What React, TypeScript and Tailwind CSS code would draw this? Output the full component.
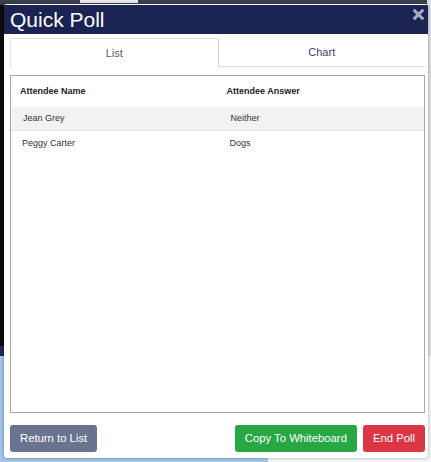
const rows = [
  { name: "Jean Grey", answer: "Neither" },
  { name: "Peggy Carter", answer: "Dogs" },
];

export default function App() {
  return (
    <div
      className="relative w-[431px] h-[462px] overflow-hidden bg-[#0b0b0d]"
      style={{ fontFamily: '"Liberation Sans", Arial, sans-serif' }}
    >
      {/* backdrop behind the dialog */}
      <div className="absolute left-0 top-0 w-full h-[5px] bg-[#3b3f4d]" />
      <div className="absolute left-[80px] top-0 w-[58px] h-[3px] bg-[#e8e8ea]" />
      <div className="absolute left-0 top-[346px] w-full h-[10px] bg-[#1c2a50]" />
      <div className="absolute left-0 top-[356px] w-full h-[106px] bg-[#9ec4e8]" />
      <div className="absolute left-[268px] top-[356px] w-[163px] h-[106px] bg-[#f1f3f6]" />
      <div className="absolute right-0 top-0 w-[4px] h-[356px] bg-[#d9dbe0]" />

      <div className="relative pl-[4px] pt-[4px] pr-[3px]">
        <div className="flex flex-col h-[454px] bg-white rounded-[3px] shadow-[0_0_3px_rgba(0,0,0,0.35)] overflow-hidden">
          {/* header */}
          <div className="flex items-start justify-between h-[29px] mt-[1px] bg-[#1a2352] pl-[6px] pr-[4px]">
            <span className="text-white text-[21px] leading-[29px]">Quick Poll</span>
            <svg width="11" height="11" viewBox="0 0 10 10" className="mt-[4px]">
              <path d="M1.6 1.6 L8.4 8.4 M8.4 1.6 L1.6 8.4" stroke="#a6abbe" strokeWidth="2.8" strokeLinecap="square" />
            </svg>
          </div>

          <div className="flex flex-col flex-1 pl-[6px] pr-[3px] pt-[4px] pb-[6px]">
            {/* tabs */}
            <div className="flex h-[29px] text-[11px]">
              <div className="flex-1 flex items-center justify-center text-[#5a5a5a] border border-b-0 border-[#e2e2e2] rounded-t-[3px]">
                List
              </div>
              <div className="flex-1 flex items-center justify-center text-[#34426b] border-b border-[#e2e2e2] shadow-[-1px_0_2px_rgba(0,0,0,0.08)]">
                Chart
              </div>
            </div>

            {/* answers table */}
            <div className="mt-[8px] h-[338px] border border-[#a8a8a8] text-[9px] text-[#333]">
              <div className="flex h-[31px] items-center pt-[1px] font-bold text-[#222]">
                <div className="w-1/2 pl-[9px]">Attendee Name</div>
                <div className="w-1/2 pl-[9px]">Attendee Answer</div>
              </div>
              {rows.map((row, i) => (
                <div
                  key={row.name}
                  className={`flex h-[24px] items-center ${i === 0 ? "bg-[#f2f2f2] border-b border-[#e4e4e4] pt-[1px]" : "pt-[2px]"}`}
                >
                  <div className={`w-1/2 ${i === 0 ? "pl-[12px]" : "pl-[11px]"}`}>{row.name}</div>
                  <div className={`w-1/2 ${i === 0 ? "pl-[13px]" : "pl-[12px]"}`}>{row.answer}</div>
                </div>
              ))}
            </div>

            {/* actions */}
            <div className="flex items-center mt-auto text-[11.3px] text-white">
              <button className="h-[27px] px-[10px] rounded-[3px] bg-[#6a7390]">Return to List</button>
              <div className="flex-1" />
              <button className="h-[27px] px-[10px] rounded-[3px] bg-[#28a745]">Copy To Whiteboard</button>
              <button className="ml-[6px] h-[27px] px-[10px] rounded-[3px] bg-[#dc3545]">End Poll</button>
            </div>
          </div>
        </div>
      </div>
    </div>
  );
}
